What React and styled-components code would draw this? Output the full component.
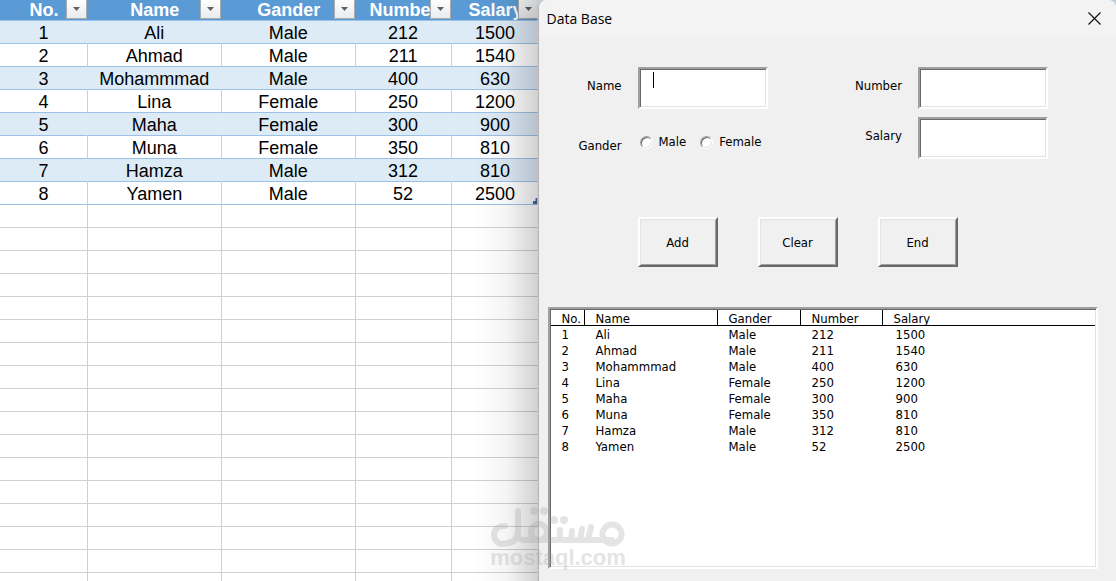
import React, { useState } from 'react';
import styled, { createGlobalStyle } from 'styled-components';

const people = [
  { id: 1, name: 'Ali', gander: 'Male', number: 212, salary: 1500 },
  { id: 2, name: 'Ahmad', gander: 'Male', number: 211, salary: 1540 },
  { id: 3, name: 'Mohammmad', gander: 'Male', number: 400, salary: 630 },
  { id: 4, name: 'Lina', gander: 'Female', number: 250, salary: 1200 },
  { id: 5, name: 'Maha', gander: 'Female', number: 300, salary: 900 },
  { id: 6, name: 'Muna', gander: 'Female', number: 350, salary: 810 },
  { id: 7, name: 'Hamza', gander: 'Male', number: 312, salary: 810 },
  { id: 8, name: 'Yamen', gander: 'Male', number: 52, salary: 2500 }
];

const fields = ['id', 'name', 'gander', 'number', 'salary'];
const titles = ['No.', 'Name', 'Gander', 'Number', 'Salary'];
const sheetWidths = [88, 134, 134, 96, 88];
const listWidths = [34, 133, 83, 82];
const emptyRows = Array.from({ length: 17 }, (_, i) => i);

const GlobalStyle = createGlobalStyle`
  * {
    box-sizing: border-box;
  }

  body {
    margin: 0;
    background: #fff;
  }
`;

const Page = styled.div`
  position: relative;
  display: flex;
  height: 100vh;
  min-height: 560px;
  overflow: hidden;
`;

const Sheet = styled.section`
  position: relative;
  flex: 538 1 0;
  min-width: 0;
  overflow: hidden;
  background: #fff;
  font-family: 'Liberation Sans', Arial, sans-serif;

  /* shadow thrown by the dialog */
  &::after {
    content: '';
    position: absolute;
    top: 0;
    right: 0;
    bottom: 0;
    width: 64px;
    background: linear-gradient(
      to right,
      rgba(0, 0, 0, 0),
      rgba(0, 0, 0, 0.04) 50%,
      rgba(0, 0, 0, 0.18)
    );
    pointer-events: none;
  }
`;

const SheetTable = styled.table`
  width: calc(100% + 2px);
  table-layout: fixed;
  border-collapse: separate;
  border-spacing: 0;
  font-size: 18px;
  line-height: 20px;
  color: #000;
`;

const SheetHead = styled.th`
  position: relative;
  height: 21px;
  padding: 0;
  border-bottom: 1px solid #9bc2e6;
  background: #5b9bd5;
  color: #fff;
  white-space: nowrap;
`;

const SheetCell = styled.td`
  height: 23px;
  padding: 2px 0 0;
  border-right: 1px solid ${props => (props.$banded ? '#ddebf7' : '#d0d0d0')};
  border-bottom: 1px solid ${props => (props.$filled ? '#9bc2e6' : '#d0d0d0')};
  background: ${props => (props.$banded ? '#ddebf7' : '#fff')};
  text-align: center;
`;

const FilterButton = styled.button`
  position: absolute;
  top: -2px;
  right: 1px;
  display: flex;
  align-items: center;
  justify-content: center;
  width: 21px;
  height: 21px;
  padding: 0;
  border: 1px solid #ababab;
  background: linear-gradient(#fff, #e9ebee);
`;

const Dialog = styled.main`
  position: relative;
  display: flex;
  flex: 578 1 0;
  flex-direction: column;
  min-width: 0;
  border-left: 1px solid #b4b4b4;
  border-radius: 8px 8px 0 0;
  background: #f0f0f0;
  box-shadow: 0 0 0 8px #c4ccd4;
  clip-path: inset(0);
  color: #000;
  font-family: 'DejaVu Sans Condensed', 'DejaVu Sans', Tahoma, sans-serif;
  font-size: 13px;
  line-height: 16px;
`;

const TitleBar = styled.header`
  display: flex;
  flex: none;
  align-items: center;
  justify-content: space-between;
  height: 37px;
  padding: 0 15px 0 8px;
  border-radius: 8px 8px 0 0;
  background: #f3f3f3;
`;

const Title = styled.h1`
  margin: 0;
  font-family: 'Open Sans', 'Segoe UI', sans-serif;
  font-size: 14px;
  font-weight: 400;
  line-height: 20px;
`;

const CloseButton = styled.button`
  display: flex;
  padding: 0;
  border: 0;
  background: none;
`;

const Form = styled.form`
  display: flex;
  flex: none;
  flex-direction: column;
  gap: 58px;
  padding: 30px 68px 0 0;
`;

const FormColumns = styled.div`
  display: flex;
  justify-content: space-between;
`;

const Fields = styled.div`
  display: grid;
  grid-template-columns: ${props => props.$label}px auto;
  grid-auto-rows: 42px;
  gap: 8px 16px;
`;

const Label = styled.label`
  align-self: center;
  padding-bottom: 4px;
  text-align: right;
`;

const GroupLabel = styled.span`
  align-self: center;
  padding-top: 16px;
  text-align: right;
`;

const InputWrapper = styled.div`
  position: relative;
`;

const Input = styled.input`
  display: block;
  width: 130px;
  height: 42px;
  padding: 2px 8px;
  border: 2px solid;
  border-color: #a0a0a0 #fff #fff #a0a0a0;
  outline: none;
  background: #fff;
  box-shadow: inset 1px 1px #696969, inset -1px -1px #e3e3e3;
  font: inherit;
`;

const Caret = styled.span`
  position: absolute;
  top: 5px;
  left: 15px;
  width: 1px;
  height: 16px;
  background: #000;
`;

const RadioGroup = styled.div`
  display: flex;
  align-items: center;
  gap: 14px;
  padding: 8px 0 0 2px;
`;

const RadioLabel = styled.label`
  display: flex;
  align-items: center;
  gap: 6px;
`;

const Radio = styled.input`
  appearance: none;
  width: 13px;
  height: 13px;
  margin: 0;
  border: 1px solid;
  border-color: #a0a0a0 #fff #fff #a0a0a0;
  border-radius: 50%;
  background: #fff;
  box-shadow: inset 1px 1px #696969, inset -1px -1px #e3e3e3;

  &:checked {
    background: radial-gradient(#000 2px, #fff 3px);
  }
`;

const Buttons = styled.div`
  display: flex;
  gap: 40px;
  padding-left: 99px;
`;

const Button = styled.button`
  width: 80px;
  height: 50px;
  padding: 2px 0 0;
  border: 2px solid;
  border-color: #fff #696969 #696969 #fff;
  background: #f0f0f0;
  box-shadow: inset 1px 1px #e3e3e3, inset -1px -1px #a0a0a0;
  color: #000;
  font: inherit;
`;

const ListBox = styled.div`
  flex: 1;
  min-height: 0;
  margin: 40px 18px 12px 9px;
  padding: 1px;
  overflow: hidden;
  border: 2px solid;
  border-color: #a0a0a0 #fff #fff #a0a0a0;
  background: #fff;
  box-shadow: inset 1px 1px #696969, inset -1px -1px #e3e3e3;
`;

const ListTable = styled.table`
  width: 100%;
  table-layout: fixed;
  border-collapse: separate;
  border-spacing: 0;
  line-height: 14px;
  text-align: left;
`;

const ListHead = styled.th`
  height: 16px;
  padding: 2px 0 0 11px;
  border-right: 1px solid #000;
  border-bottom: 1px solid #000;
  font-weight: 400;
  line-height: 13px;
  white-space: nowrap;

  &:last-child {
    border-right: 0;
  }
`;

const ListCell = styled.td`
  height: 16px;
  padding: 2px 0 0 11px;
  white-space: nowrap;

  &:last-child {
    padding-left: 13px;
  }
`;

const Watermark = styled.div`
  position: absolute;
  bottom: 12px;
  left: calc(50% - 70px);
  width: 140px;
  opacity: 0.28;
  color: #a0a0a0;
  font-family: 'Liberation Sans', Arial, sans-serif;
  font-size: 22px;
  font-weight: 700;
  line-height: 22px;
  text-align: center;
  pointer-events: none;

  svg {
    display: block;
  }
`;

const FillHandle = styled.span`
  position: absolute;
  top: 198px;
  right: 0;
  width: 5px;
  height: 6px;
  background: #4466a8;
  clip-path: polygon(60% 0, 100% 0, 100% 100%, 0 100%, 0 50%, 60% 50%);
`;

const FilterArrow = () => (
  <svg width="7" height="4" viewBox="0 0 7 4" aria-hidden="true">
    <path d="M0 0H7L3.5 4Z" fill="#606060" />
  </svg>
);

const CloseIcon = () => (
  <svg width="13" height="13" viewBox="0 0 13 13" aria-hidden="true">
    <path d="M0.5 0.5L12.5 12.5M12.5 0.5L0.5 12.5" stroke="#111" strokeWidth="1.2" />
  </svg>
);

const Logo = () => (
  <svg width="140" height="42" viewBox="0 0 140 42" aria-hidden="true">
    <g fill="none" stroke="currentColor" strokeWidth="6" strokeLinecap="round">
      <path d="M17 21H15a9 9 0 0 0 0 18Q30 38 30 26V6M29 31Q31 35 37 35H124" />
      <circle cx="124" cy="29" r="9.5" />
      <circle cx="51" cy="27" r="8" />
      <path d="M103 22L100 35M94 24L92 35M84 26L83 35M72 25V35" />
    </g>
    <g fill="currentColor">
      <circle cx="46" cy="6" r="4" />
      <circle cx="56" cy="6" r="4" />
      <circle cx="66" cy="15" r="4" />
      <circle cx="76" cy="15" r="4" />
    </g>
  </svg>
);

const Spreadsheet = () => (
  <Sheet>
    <SheetTable>
      <colgroup>
        {sheetWidths.map((width, i) => <col key={titles[i]} width={`${width / 5.4}%`} />)}
      </colgroup>
      <thead>
        <tr>
          {titles.map(title => (
            <SheetHead key={title}>
              {title}
              <FilterButton type="button" aria-label={`Filter ${title}`}>
                <FilterArrow />
              </FilterButton>
            </SheetHead>
          ))}
        </tr>
      </thead>
      <tbody>
        {people.map((person, i) => (
          <tr key={person.id}>
            {fields.map(field => (
              <SheetCell key={field} $filled $banded={i % 2 === 0}>{person[field]}</SheetCell>
            ))}
          </tr>
        ))}
        {emptyRows.map(row => (
          <tr key={row}>
            {fields.map(field => <SheetCell key={field} />)}
          </tr>
        ))}
      </tbody>
    </SheetTable>
    <FillHandle />
  </Sheet>
);

const PeopleList = () => (
  <ListBox>
    <ListTable>
      <colgroup>
        {listWidths.map((width, i) => <col key={titles[i]} width={width} />)}
        <col />
      </colgroup>
      <thead>
        <tr>
          {titles.map(title => <ListHead key={title}>{title}</ListHead>)}
        </tr>
      </thead>
      <tbody>
        {people.map(person => (
          <tr key={person.id}>
            {fields.map(field => <ListCell key={field}>{person[field]}</ListCell>)}
          </tr>
        ))}
      </tbody>
    </ListTable>
  </ListBox>
);

const App = () => {
  const [gander, setGander] = useState('');

  return (
    <Page>
      <GlobalStyle />
      <Spreadsheet />
      <Dialog>
        <TitleBar>
          <Title>Data Base</Title>
          <CloseButton type="button" aria-label="Close"><CloseIcon /></CloseButton>
        </TitleBar>
        <Form onSubmit={e => e.preventDefault()} onReset={() => setGander('')}>
          <FormColumns>
            <Fields $label={83}>
              <Label htmlFor="name">Name</Label>
              <InputWrapper>
                <Input id="name" type="text" />
                <Caret />
              </InputWrapper>
              <GroupLabel id="gander">Gander</GroupLabel>
              <RadioGroup role="radiogroup" aria-labelledby="gander">
                {['Male', 'Female'].map(option => (
                  <RadioLabel key={option}>
                    <Radio
                      type="radio"
                      name="gander"
                      checked={gander === option}
                      onChange={() => setGander(option)}
                    />
                    {option}
                  </RadioLabel>
                ))}
              </RadioGroup>
            </Fields>
            <Fields $label={60}>
              <Label htmlFor="number">Number</Label>
              <Input id="number" type="text" />
              <Label htmlFor="salary">Salary</Label>
              <Input id="salary" type="text" />
            </Fields>
          </FormColumns>
          <Buttons>
            <Button type="submit">Add</Button>
            <Button type="reset">Clear</Button>
            <Button type="button">End</Button>
          </Buttons>
        </Form>
        <PeopleList />
      </Dialog>
      <Watermark>
        <Logo />
        mostaql.com
      </Watermark>
    </Page>
  );
};

export default App;
